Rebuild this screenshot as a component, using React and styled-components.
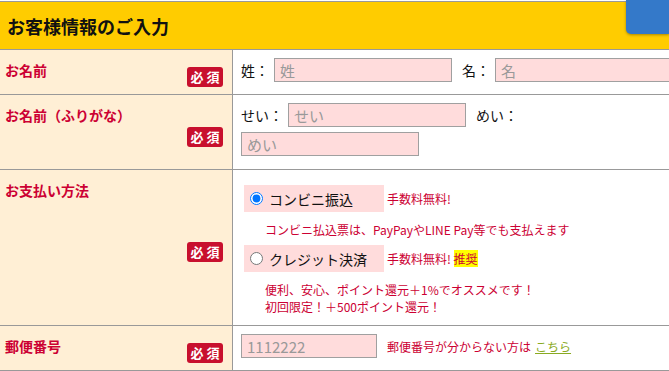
import React from 'react';
import styled, { createGlobalStyle } from 'styled-components';

const GlobalStyle = createGlobalStyle`
  body {
    margin: 0;
    background: #fff;
    overflow: hidden;
    font-family: "Noto Sans CJK JP", "Noto Sans", sans-serif;
  }
`;

const RED = '#cc0033';
const LINE = '#999';

const Page = styled.div`
  position: relative;
  width: 669px;
  padding-top: 1px;
`;

const Header = styled.div`
  display: flex;
  align-items: center;
  height: 47px;
  padding-left: 7px;
  background: #ffcc00;
  border-top: 1px solid ${LINE};
  border-bottom: 1px solid ${LINE};
  font-size: 18px;
  font-weight: bold;
  color: #111;
`;

const CornerButton = styled.div`
  position: absolute;
  top: 0;
  right: 0;
  width: 43px;
  height: 34px;
  background: #3479c9;
  border-radius: 0 0 0 5px;
  box-shadow: 0 1px 3px rgba(0, 0, 0, 0.35);
`;

const Row = styled.div`
  display: grid;
  grid-template-columns: 233px 1fr;
  border-bottom: 1px solid ${LINE};
`;

const LabelCell = styled.div`
  display: flex;
  justify-content: space-between;
  padding: 9px 9px 0 5px;
  background: #ffefd5;
  border-right: 1px solid ${LINE};
`;

const LabelText = styled.div`
  align-self: flex-start;
  font-size: 14px;
  line-height: 22px;
  font-weight: bold;
  color: ${RED};
`;

const Badge = styled.span`
  align-self: center;
  width: 36px;
  height: 20px;
  line-height: 20px;
  border-radius: 3px;
  background: #c8102e;
  color: #fff;
  font-size: 13px;
  font-weight: bold;
  text-align: center;
  letter-spacing: 3px;
  text-indent: 3px;
`;

const FieldCell = styled.div`
  display: flex;
  flex-direction: column;
  gap: ${p => p.$gap ?? 5}px;
  padding: ${p => p.$pad || '8px 0 12px 8px'};
  min-width: 0;
`;

const Line = styled.div`
  display: flex;
  align-items: center;
  white-space: nowrap;
`;

const FieldLabel = styled.span`
  font-size: 14px;
  color: #111;
  margin-right: 5px;
`;

const TextInput = styled.input`
  box-sizing: border-box;
  flex: none;
  width: ${p => p.$w || 178}px;
  height: 24px;
  margin: 0 10px 0 0;
  padding: 0 5px;
  border: 1px solid #a0a0a0;
  background: #ffdcdc;
  font-family: inherit;
  font-size: 15px;
  color: #111;
  &::placeholder {
    color: #999;
  }
`;

const Option = styled.label`
  display: flex;
  align-items: center;
  box-sizing: border-box;
  width: 140px;
  height: 27px;
  padding-left: 6px;
  background: #ffdcdc;
  font-size: 14px;
  color: #111;
  input {
    width: 13px;
    height: 13px;
    margin: 0 6px 0 0;
  }
`;

const SmallRed = styled.span`
  font-size: 12px;
  color: ${RED};
  margin-left: ${p => p.$ml || 0}px;
`;

const Mark = styled.span`
  background: #ffff00;
`;

const Note = styled.div`
  padding-left: 21px;
  font-size: 12px;
  line-height: 17px;
  color: ${RED};
  margin: ${p => p.$m || '0'};
`;

const Link = styled.a`
  color: #8aaa22;
  text-decoration: underline;
  margin-left: 4px;
`;

export default function App() {
  return (
    <Page>
      <GlobalStyle />
      <Header>お客様情報のご入力</Header>
      <CornerButton />

      <Row>
        <LabelCell>
          <LabelText>お名前</LabelText>
          <Badge>必須</Badge>
        </LabelCell>
        <FieldCell>
          <Line>
            <FieldLabel>姓：</FieldLabel>
            <TextInput placeholder="姓" />
            <FieldLabel>名：</FieldLabel>
            <TextInput placeholder="名" />
          </Line>
        </FieldCell>
      </Row>

      <Row>
        <LabelCell>
          <LabelText>お名前（ふりがな）</LabelText>
          <Badge>必須</Badge>
        </LabelCell>
        <FieldCell $pad="8px 0 13px 8px">
          <Line>
            <FieldLabel>せい：</FieldLabel>
            <TextInput placeholder="せい" />
            <FieldLabel>めい：</FieldLabel>
          </Line>
          <Line>
            <TextInput placeholder="めい" />
          </Line>
        </FieldCell>
      </Row>

      <Row>
        <LabelCell>
          <LabelText>お支払い方法</LabelText>
          <Badge>必須</Badge>
        </LabelCell>
        <FieldCell $gap={0} $pad="15px 0 10px 11px">
          <Line>
            <Option>
              <input type="radio" name="pay" defaultChecked />
              コンビニ振込
            </Option>
            <SmallRed $ml={3}>手数料無料!</SmallRed>
          </Line>
          <Note $m="9px 0 7px">コンビニ払込票は、PayPayやLINE Pay等でも支払えます</Note>
          <Line>
            <Option>
              <input type="radio" name="pay" />
              クレジット決済
            </Option>
            <SmallRed $ml={3}>
              手数料無料! <Mark>推奨</Mark>
            </SmallRed>
          </Line>
          <Note $m="9px 0 0">
            便利、安心、ポイント還元＋1%でオススメです！
            <br />
            初回限定！＋500ポイント還元！
          </Note>
        </FieldCell>
      </Row>

      <Row>
        <LabelCell>
          <LabelText>郵便番号</LabelText>
          <Badge>必須</Badge>
        </LabelCell>
        <FieldCell>
          <Line>
            <TextInput $w={136} placeholder="1112222" />
            <SmallRed>
              郵便番号が分からない方は<Link href="#">こちら</Link>
            </SmallRed>
          </Line>
        </FieldCell>
      </Row>
    </Page>
  );
}
